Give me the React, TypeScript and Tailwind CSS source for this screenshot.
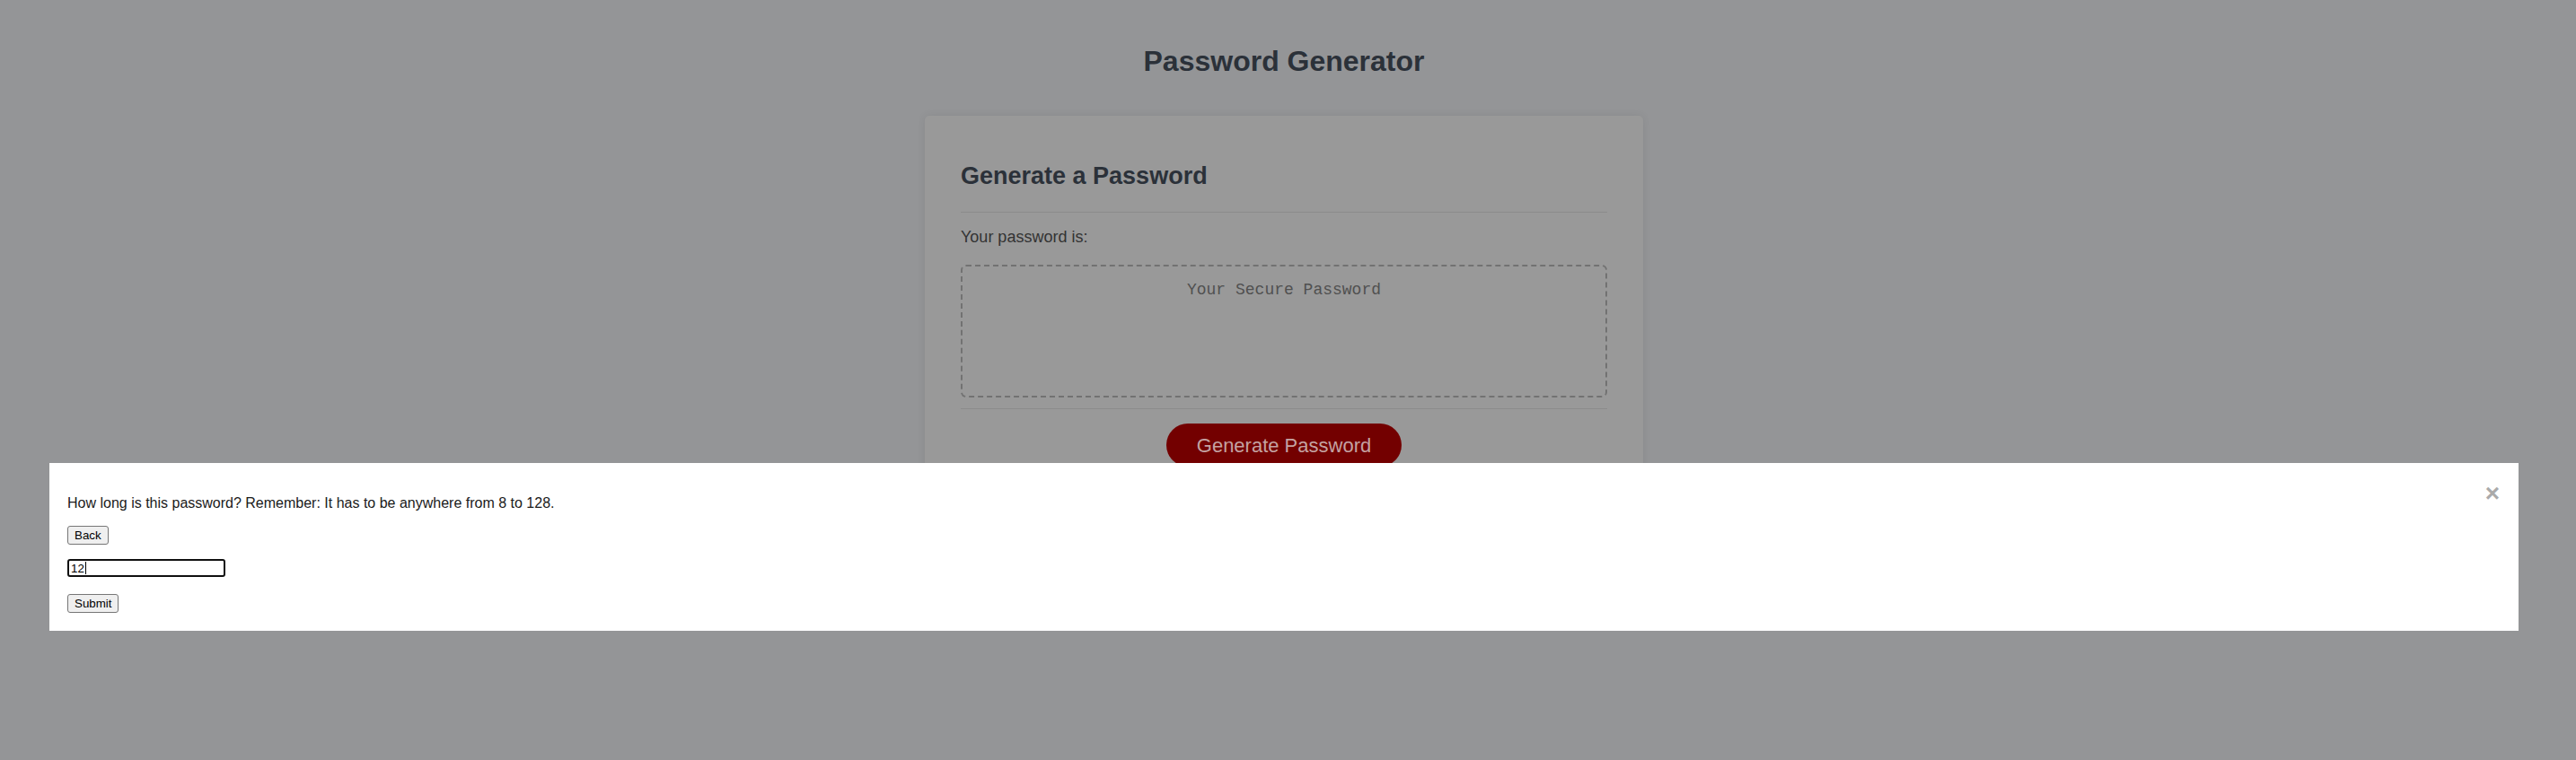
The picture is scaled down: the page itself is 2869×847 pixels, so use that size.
export default function App() {
  return (
    <div className="relative min-h-[847px] w-full overflow-hidden bg-[#949597] font-['Liberation_Sans',Arial,sans-serif]">
      {/* page behind the prompt */}
      <div className="pr-[9px]">
        <h1 className="pt-[49px] text-center text-[32px] font-bold leading-[38px] text-[#2b3139]">Password Generator</h1>

        <div className="mx-auto mt-[42px] w-[800px] rounded-[5px] bg-[#999999] px-[40px] pt-[51px] pb-[40px] shadow-[0_0_10px_rgba(0,0,0,0.08)]">
          <h2 className="text-[27px] font-bold leading-[32px] text-[#2b3139]">Generate a Password</h2>
          <div className="mt-[24px] h-px bg-[#8b8b8b]" />

          <p className="mt-[16px] text-[18px] leading-[22px] text-[#333333]">Your password is:</p>

          <div className="mt-[20px] h-[148px] rounded-[6px] border-2 border-dashed border-[#727272] pt-[15px] text-center font-['Liberation_Mono','DejaVu_Sans_Mono',monospace] text-[18px] leading-[22px] text-[#505050]">
            Your Secure Password
          </div>

          <div className="mt-[12px] h-px bg-[#8b8b8b]" />

          <div className="mt-[16px] flex justify-center">
            <button className="h-[48px] w-[262px] rounded-full bg-[#730000] text-[22px] text-[#c4a2a2]">Generate Password</button>
          </div>
        </div>
      </div>

      {/* length prompt */}
      <div className="absolute left-[55px] top-[516px] h-[187px] w-[2750px] bg-white px-[20px] pt-[36px]">
        <span className="absolute right-[21px] top-[20px] text-[28px] font-bold leading-none text-[#aaaaaa]">×</span>

        <p className="text-[16px] leading-[18px] text-[#1a1a1a]">
          How long is this password? Remember: It has to be anywhere from 8 to 128.
        </p>

        <button className="mt-[16px] block h-[21px] rounded-[3px] border border-[#767676] bg-[#efefef] px-[7px] text-[13.33px] leading-[15px] text-black">
          Back
        </button>

        <div className="mt-[16px] flex h-[20px] w-[176px] items-center rounded-[3px] border-2 border-[#101010] px-[2px] text-[13.33px] leading-[15px] text-black">
          <span>12</span>
          <span className="ml-px h-[14px] w-px bg-black" />
        </div>

        <button className="mt-[19px] block h-[21px] rounded-[3px] border border-[#767676] bg-[#efefef] px-[7px] text-[13.33px] leading-[15px] text-black">
          Submit
        </button>
      </div>
    </div>
  );
}
